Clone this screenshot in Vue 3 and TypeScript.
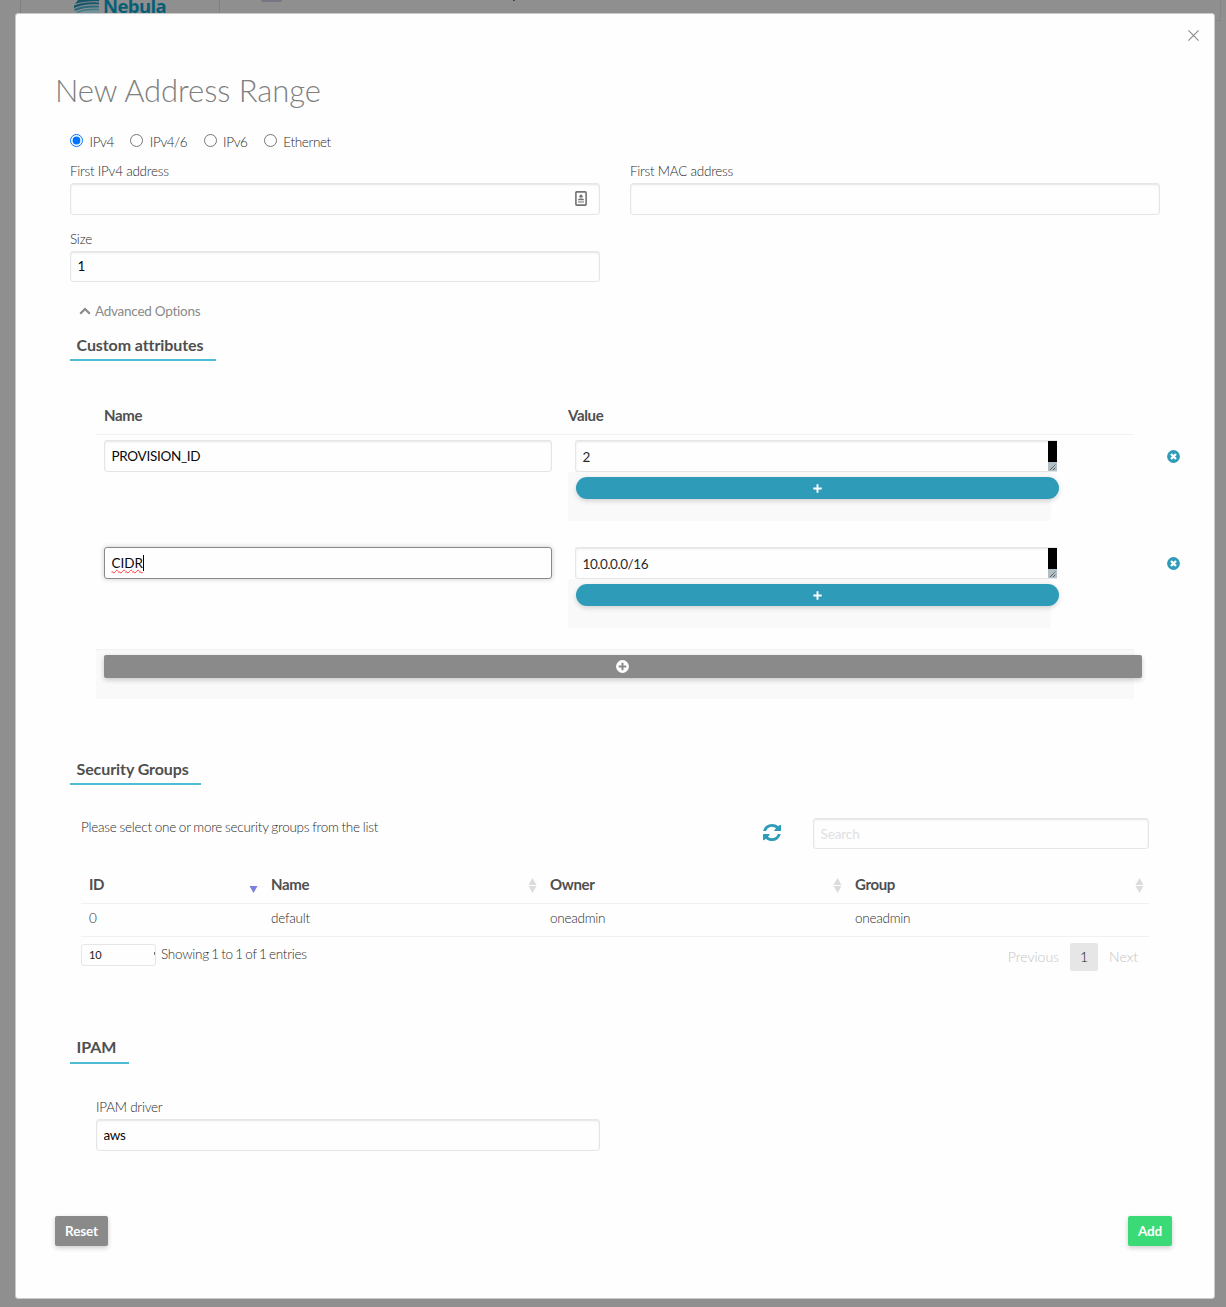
<script setup lang="ts">
import { ref } from 'vue'

interface Attribute {
  name: string
  value: string
  focused: boolean
}

interface Column {
  key: string
  label: string
  width: number
  sorted: boolean
}

const rangeTypes = ['IPv4', 'IPv4/6', 'IPv6', 'Ethernet']
const rangeType = ref('IPv4')
const firstIp = ref('')
const firstMac = ref('')
const size = ref('1')
const search = ref('')
const driver = ref('aws')

const attributes = ref<Attribute[]>([
  { name: 'PROVISION_ID', value: '2', focused: false },
  { name: 'CIDR', value: '10.0.0.0/16', focused: true },
])

const columns: Column[] = [
  { key: 'id', label: 'ID', width: 182, sorted: true },
  { key: 'name', label: 'Name', width: 279, sorted: false },
  { key: 'owner', label: 'Owner', width: 305, sorted: false },
  { key: 'group', label: 'Group', width: 302, sorted: false },
]

const groups: Record<string, string>[] = [
  { id: '0', name: 'default', owner: 'oneadmin', group: 'oneadmin' },
]
</script>

<template>
  <div class="page">
    <header class="backdrop-bar">
      <div class="brand">
        <svg class="brand-mark" width="27" height="13" viewBox="0 0 27 13">
          <path d="M5 0H26V1.500C17 1 9 2 2 4Z" fill="#17566a" />
          <path d="M1 5.500C9 2.500 18 1.800 26 2.800V4.500C17 3.500 8 5 1 8Z" fill="#17566a" />
          <path d="M1 9C9 5.800 18 5 26 6V7.500C17 7 9 8 2 11Z" fill="#296b7d" />
          <path d="M3 12C10 9 18 8 26 8.800V10.500C18 10 10 11 5 13Z" fill="#447d8c" />
          <path d="M8 13C14 11.600 20 11.300 26 11.700V13Z" fill="#6b959f" />
        </svg>
        <span class="brand-name">Nebula</span>
      </div>
      <span class="bar-chip"></span>
      <span class="bar-speck"></span>
    </header>
    <i class="page-edge"></i>

    <main class="modal">
      <button class="close" aria-label="Close">
        <svg width="11" height="11" viewBox="0 0 11 11"><path d="M.4.4 10.600 10.600M10.600.4.4 10.600" stroke="#8a8a8a" stroke-width="1.100" /></svg>
      </button>

      <h1>New Address Range</h1>

      <div class="radios">
        <label v-for="t in rangeTypes" :key="t">
          <input v-model="rangeType" type="radio" name="type" :value="t" />
          <span>{{ t }}</span>
        </label>
      </div>

      <div class="fields">
        <div class="col">
          <label class="caption">First IPv4 address</label>
          <div class="with-icon">
            <input v-model="firstIp" class="field" type="text" />
            <svg class="card-icon" width="12" height="15" viewBox="0 0 12 15">
              <rect x=".9" y=".9" width="10.200" height="13.200" rx=".8" fill="#fff" stroke="#737373" stroke-width="1.600" />
              <circle cx="6" cy="5.200" r="1.600" fill="#737373" />
              <path d="M3 8.800C3 6.900 9 6.900 9 8.800V9.300H3ZM3 10.400H9V11.600H3Z" fill="#737373" />
            </svg>
          </div>
        </div>
        <div class="col">
          <label class="caption">First MAC address</label>
          <input v-model="firstMac" class="field" type="text" />
        </div>
      </div>

      <div class="fields size-row">
        <div class="col">
          <label class="caption">Size</label>
          <input v-model="size" class="field short" type="text" />
        </div>
      </div>

      <a class="advanced">
        <svg width="12" height="8" viewBox="0 0 12 8"><path d="M1.200 6.800 6 2 10.800 6.800" fill="none" stroke="#8a8a8a" stroke-width="2.200" /></svg>
        Advanced Options
      </a>

      <h2 class="tab t-custom">Custom attributes</h2>

      <section class="attrs">
        <div class="attr-head"><span>Name</span><span>Value</span></div>
        <div v-for="a in attributes" :key="a.name" class="attr-row">
          <div class="attr-name">
            <div v-if="a.focused" class="field focused"><span class="misspelt">{{ a.name }}</span><i class="caret"></i></div>
            <input v-else v-model="a.name" class="field" type="text" />
          </div>
          <div class="attr-value">
            <div class="area">
              <span>{{ a.value }}</span>
              <div class="scroll">
                <svg width="9" height="9" viewBox="0 0 9 9"><path d="M2 8 7.500 2.500M5 8 7.500 5.500" stroke="#444" stroke-width="1" stroke-dasharray="1.100 .5" /></svg>
              </div>
            </div>
            <div class="area-foot">
              <button class="pill" aria-label="Add value">
                <svg width="9" height="9" viewBox="0 0 9 9"><path d="M4.500.3V8.700M.3 4.500H8.700" stroke="#fff" stroke-width="1.900" /></svg>
              </button>
            </div>
          </div>
          <button class="remove" aria-label="Remove">
            <svg width="13" height="13" viewBox="0 0 13 13"><circle cx="6.500" cy="6.500" r="6.400" fill="#2e9cb9" /><path d="M4 4 9 9M9 4 4 9" stroke="#fff" stroke-width="2.300" /></svg>
          </button>
        </div>
        <div class="attr-foot">
          <button class="add-row" aria-label="Add attribute">
            <svg width="13" height="13" viewBox="0 0 13 13"><circle cx="6.500" cy="6.500" r="6.400" fill="#fff" /><path d="M6.500 2.700V10.300M2.700 6.500H10.300" stroke="#8a8a8a" stroke-width="2" /></svg>
          </button>
        </div>
      </section>

      <h2 class="tab t-groups">Security Groups</h2>

      <section class="groups">
        <div class="groups-top">
          <p>Please select one or more security groups from the list</p>
          <svg class="refresh" width="18" height="17" viewBox="0 0 1536 1536" preserveAspectRatio="none">
            <path fill="#2e9cb9" d="M1511 928q0 5-1 7-64 268-268 434.500T764 1536q-146 0-282.500-55T238 1324l-129 129q-19 19-45 19t-45-19-19-45V960q0-26 19-45t45-19h448q26 0 45 19t19 45-19 45l-137 137q71 66 161 102t187 36q134 0 250-65t186-179q11-17 53-117 8-23 30-23h192q13 0 22.500 9.500t9.500 22.500zm25-800v448q0 26-19 45t-45 19h-448q-26 0-45-19t-19-45 19-45l138-138Q969 256 768 256q-134 0-250 65T332 500q-11 17-53 117-8 23-30 23H50q-13 0-22.500-9.500T18 608v-7q65-268 270-434.500T768 0q146 0 284 55.500T1297 212l130-129q19-19 45-19t45 19 19 45z" />
          </svg>
          <input v-model="search" class="field short" type="text" placeholder="Search" />
        </div>
        <div class="grid-head">
          <div v-for="c in columns" :key="c.key" :style="{ width: c.width + 'px' }">
            <span>{{ c.label }}</span>
            <svg v-if="c.sorted" width="9" height="15" viewBox="0 0 9 15"><path d="M.5 8H8.500L4.500 15Z" fill="#7b80de" /></svg>
            <svg v-else width="9" height="15" viewBox="0 0 9 15"><path d="M.5 7H8.500L4.500 0ZM.5 8H8.500L4.500 15Z" fill="#dcdcdc" /></svg>
          </div>
        </div>
        <div v-for="g in groups" :key="g.id" class="grid-row">
          <div v-for="c in columns" :key="c.key" :style="{ width: c.width + 'px' }">{{ g[c.key] }}</div>
        </div>
        <div class="grid-foot">
          <div class="select">10<i></i></div>
          <span class="info">Showing 1 to 1 of 1 entries</span>
          <nav><a>Previous</a><a class="current">1</a><a>Next</a></nav>
        </div>
      </section>

      <h2 class="tab t-ipam">IPAM</h2>
      <section class="ipam">
        <label class="caption">IPAM driver</label>
        <input v-model="driver" class="field" type="text" />
      </section>

      <footer>
        <button class="btn reset">Reset</button>
        <button class="btn add">Add</button>
      </footer>
    </main>
  </div>
</template>

<style>
body {
  background: #8f8f8f;
}
</style>

<style scoped>
* {
  box-sizing: border-box;
}
.page {
  position: relative;
  height: 1307px;
  overflow: hidden;
  font: 300 13.5px/22px Lato, sans-serif;
  letter-spacing: -0.25px;
  color: #2b2b2b;
  background: #8f8f8f;
}
button {
  border: 0;
  padding: 0;
  font-family: inherit;
}
svg {
  display: block;
  flex: none;
}
.backdrop-bar {
  display: flex;
  height: 13px;
  overflow: hidden;
}
.brand {
  display: flex;
  width: 200px;
  height: 13px;
  margin-left: 20px;
  padding-left: 52px;
  border: solid #808080;
  border-width: 0 1px;
}
.brand-name {
  margin: -6px 0 0 3px;
  font: 700 18.5px/24px "Open Sans", sans-serif;
  letter-spacing: -0.6px;
  color: #075f77;
}
.bar-chip {
  width: 21px;
  height: 2px;
  margin-left: 41px;
  border-radius: 0 0 3px 3px;
  background: #747683;
}
.bar-speck {
  width: 2px;
  height: 1px;
  margin-left: 231px;
  background: #444;
}
.page-edge {
  position: absolute;
  right: 5px;
  top: 0;
  width: 6px;
  height: 21px;
  border: solid #858585;
  border-width: 0 1px 1px 0;
}
.modal {
  position: relative;
  width: 1200px;
  height: 1286px;
  margin-left: 15px;
  padding: 55px 39px 0;
  border: 1px solid #cacaca;
  border-radius: 3px;
  background: #fefefe;
}
.close {
  position: absolute;
  right: 15px;
  top: 16px;
  background: none;
}
h1 {
  height: 45px;
  margin: 0;
  font-size: 31px;
  font-weight: 300;
  line-height: 42px;
  letter-spacing: -0.07px;
  color: #808080;
}
.radios {
  display: flex;
  height: 23px;
  margin: 17px 0 0 15px;
  letter-spacing: -0.36px;
}
.radios label {
  display: flex;
  margin-right: 16.3px;
}
.radios input {
  width: 13px;
  height: 13px;
  margin: 3px 6.5px 0 0;
}
.radios span {
  line-height: 22px;
}
.fields {
  display: flex;
  gap: 30px;
  margin: 6px 0 0 15px;
}
.col {
  width: 530px;
}
.caption {
  display: block;
  height: 23px;
  line-height: 23px;
}
.size-row {
  margin-top: 13px;
}
.with-icon {
  position: relative;
}
.card-icon {
  position: absolute;
  right: 13px;
  top: 8px;
}
.field {
  display: block;
  width: 100%;
  height: 32px;
  padding: 0 6.5px;
  border: 1px solid #e6e6e6;
  border-radius: 3px;
  background: #fefefe;
  box-shadow: inset 0 1px 2px rgba(10, 10, 10, 0.1);
  font: 400 13.5px/20px Lato, sans-serif;
  letter-spacing: -0.3px;
  color: #0a0a0a;
}
.field::placeholder {
  color: #e0e0e0;
}
.field.short {
  height: 31px;
  padding-bottom: 2px;
}
.groups-top .field.short {
  padding-bottom: 0;
  letter-spacing: -0.1px;
}
.field.focused {
  display: flex;
  padding-top: 5px;
  border-color: #8a8a8a;
  box-shadow: 0 0 5px #cacaca;
}
.misspelt {
  height: 21px;
  letter-spacing: 0;
  text-decoration: underline wavy #f33 1px;
  text-underline-offset: 1px;
  text-decoration-skip-ink: none;
}
.caret {
  width: 1px;
  height: 16px;
  margin-top: 2px;
  background: #000;
}
.advanced {
  display: flex;
  align-items: center;
  gap: 4px;
  width: max-content;
  height: 22px;
  margin: 18px 0 0 24px;
  font-weight: 400;
  color: #8a8a8a;
}
.tab {
  width: max-content;
  height: 31px;
  margin: 0 0 0 15px;
  padding-left: 6.5px;
  border-bottom: 2px solid #4dbbd3;
  font-size: 16px;
  font-weight: 700;
  line-height: 29px;
  letter-spacing: -0.09px;
  color: #4f4f4f;
}
.t-custom {
  width: 146px;
  margin-top: 8px;
}
.attrs {
  margin: 39px 0 0 41px;
}
.attr-head {
  display: flex;
  width: 1038px;
  height: 35px;
  padding-left: 8px;
  border-bottom: 1px solid #f1f1f1;
  font-size: 15px;
  font-weight: 700;
  line-height: 31px;
  letter-spacing: -0.35px;
  color: #4f4f4f;
}
.attr-head span {
  width: 464px;
}
.attr-row {
  display: flex;
  height: 107px;
  padding: 5px 0 0 8px;
}
.attr-name {
  flex: none;
  width: 448px;
}
.attr-value {
  flex: none;
  width: 483px;
  margin-left: 16px;
}
.area {
  display: flex;
  justify-content: space-between;
  width: 482px;
  height: 32px;
  margin-left: 7px;
  padding-left: 6.5px;
  border: 1px solid #e6e6e6;
  border-right: 0;
  border-radius: 3px 0 0 3px;
  box-shadow: inset 0 1px 2px rgba(10, 10, 10, 0.1);
  font-weight: 400;
  line-height: 33px;
  letter-spacing: -0.45px;
}
.scroll {
  width: 9px;
  height: 30px;
  padding-top: 21px;
  background: linear-gradient(#000 21px, #b0bec5 21px);
}
.area-foot {
  height: 49px;
  padding: 5px 0 0 8px;
  background: #f9f9f9;
}
.pill {
  display: flex;
  align-items: center;
  justify-content: center;
  width: 483px;
  height: 22px;
  border-radius: 11px;
  background: #2e9cb9;
  box-shadow: 0 2px 5px rgba(0, 0, 0, 0.16);
}
.remove {
  height: 13px;
  margin: 10px 0 0 116px;
  background: none;
}
.attr-foot {
  width: 1038px;
  height: 50px;
  padding: 5px 0 0 8px;
  border-top: 1px solid #f1f1f1;
  background: #f9f9f9;
}
.add-row {
  display: flex;
  align-items: center;
  justify-content: center;
  width: 1038px;
  height: 23px;
  padding-right: 1px;
  border-radius: 2px;
  background: #8a8a8a;
  box-shadow: 0 2px 5px rgba(0, 0, 0, 0.2);
}
.t-groups {
  width: 131px;
  margin-top: 55px;
}
.groups {
  width: 1068px;
  margin: 33px 0 0 26px;
}
.groups-top {
  display: flex;
  height: 47px;
}
.groups-top p {
  width: 682px;
  margin: -2px 0 0;
  word-spacing: -0.5px;
}
.refresh {
  margin: 6px 32px 0 0;
}
.groups-top .field {
  width: 336px;
}
.grid-head {
  display: flex;
  height: 39px;
  border-bottom: 1px solid #f1f1f1;
  font-size: 15px;
  font-weight: 700;
  line-height: 39px;
  letter-spacing: -0.35px;
  color: #4f4f4f;
}
.grid-head div {
  display: flex;
  justify-content: space-between;
  padding: 0 5px 0 8px;
}
.grid-head svg {
  margin-top: 13px;
}
.grid-row {
  display: flex;
  height: 33px;
  border-bottom: 1px solid #f1f1f1;
  line-height: 28px;
}
.grid-row div {
  padding-left: 8px;
}
.grid-foot {
  display: flex;
  height: 34px;
  padding-top: 6px;
}
.select {
  display: flex;
  justify-content: space-between;
  width: 75px;
  height: 22px;
  margin-top: 1px;
  padding-left: 7px;
  border: 1px solid #e6e6e6;
  border-radius: 3px;
  font-size: 11px;
  font-weight: 400;
  line-height: 20px;
  letter-spacing: -0.2px;
  color: #222;
}
.select i {
  width: 1px;
  height: 3px;
  margin-top: 7px;
  background: #777;
}
.info {
  margin-left: 5px;
  word-spacing: -1px;
}
nav {
  display: flex;
  margin-left: auto;
  line-height: 28px;
  color: #c4c4c4;
  font-size: 14px;
  letter-spacing: 0;
}
nav a {
  padding: 0 11px;
}
nav .current {
  width: 28px;
  height: 28px;
  padding: 0;
  border-radius: 2px;
  background: #e6e6e6;
  text-align: center;
  color: #222;
}
.t-ipam {
  width: 59px;
  margin-top: 62px;
  line-height: 27px;
}
.ipam {
  width: 504px;
  margin: 32px 0 0 41px;
}
footer {
  display: flex;
  justify-content: space-between;
  width: 1117px;
  margin-top: 65px;
}
.btn {
  width: 53px;
  height: 30px;
  padding-bottom: 1px;
  border-radius: 2px;
  box-shadow: 0 2px 5px rgba(0, 0, 0, 0.2);
  font-size: 13.5px;
  font-weight: 700;
  letter-spacing: -0.15px;
  color: #fefefe;
}
.reset {
  background: #8a8a8a;
}
.add {
  width: 44px;
  background: #3adb76;
}
</style>
